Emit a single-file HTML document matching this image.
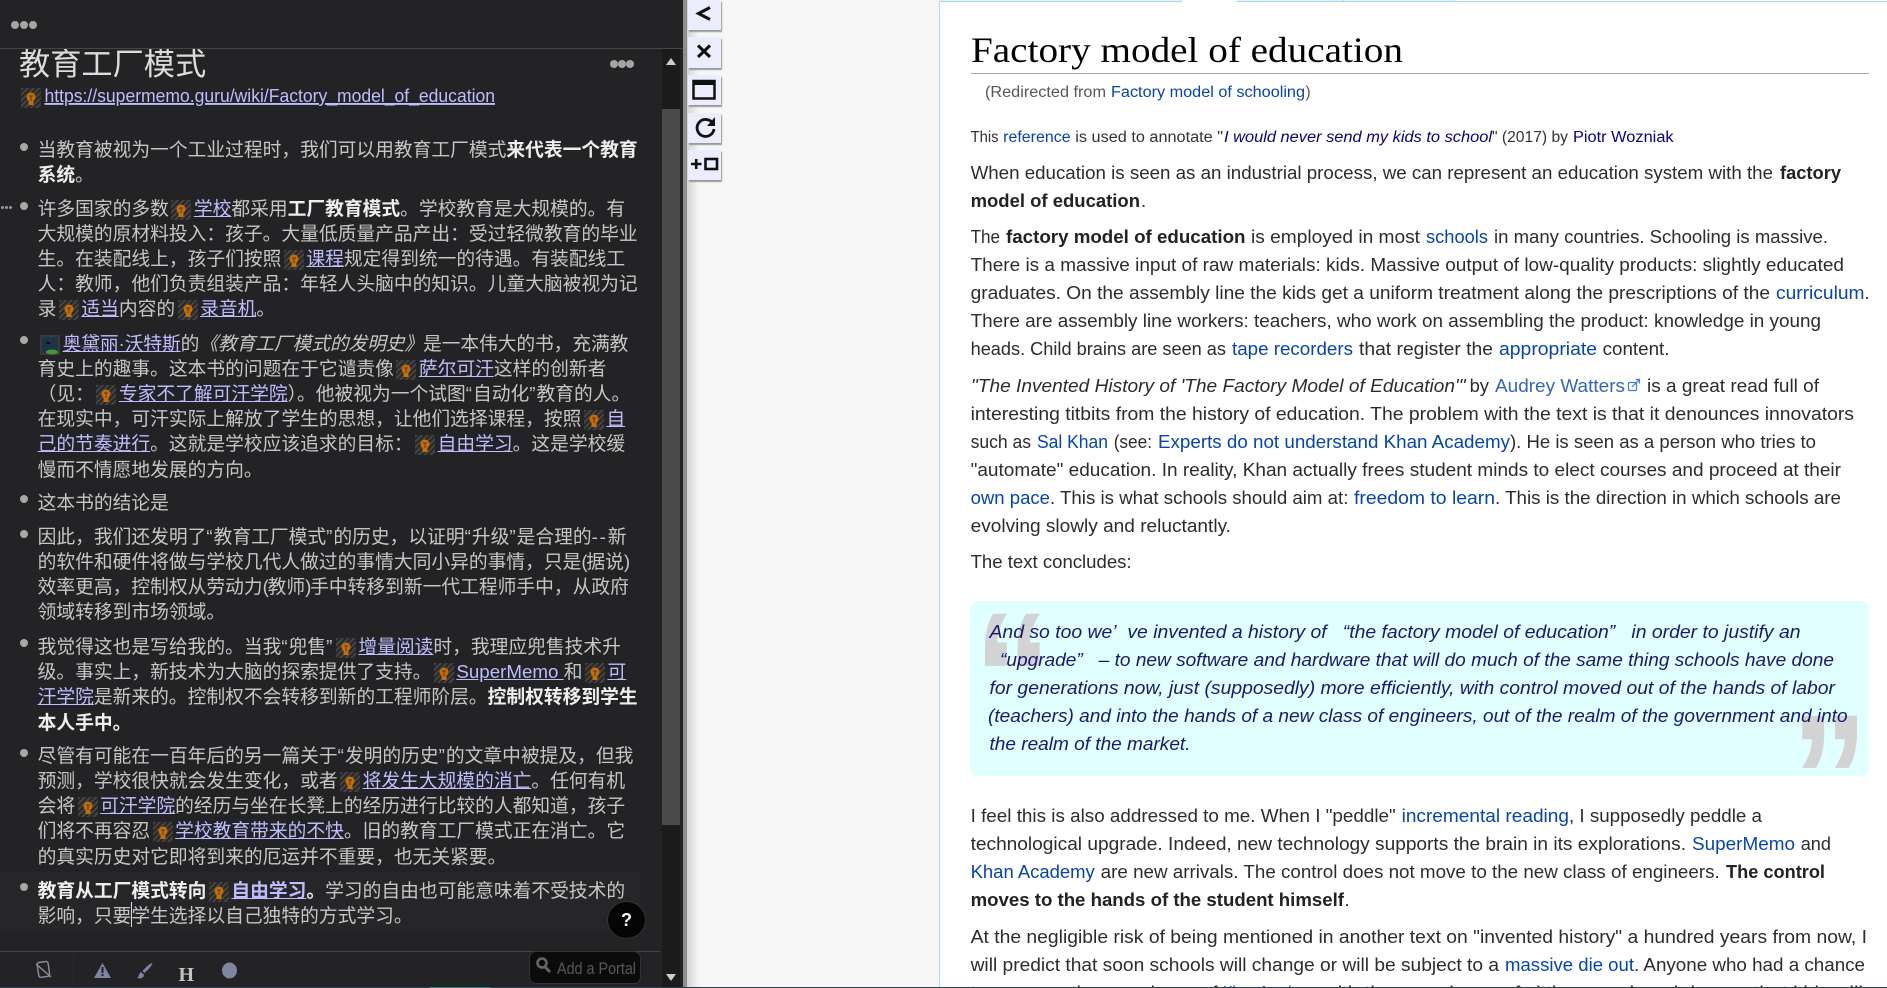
<!DOCTYPE html>
<html lang="zh"><head><meta charset="utf-8"><title>教育工厂模式</title>
<style>
html,body{margin:0;padding:0;width:1887px;height:988px;overflow:hidden;background:#f6f6f6}
body{position:relative;font-family:"Liberation Sans","Noto Sans CJK SC",sans-serif}
.abs{position:absolute}
#left{left:0;top:0;width:683px;height:988px;background:#232325;overflow:hidden}
.l{position:absolute;left:37.6px;white-space:pre;line-height:25.2px;font-size:18.75px;color:#c6c6c6}
.l b{color:#eee;font-weight:700}
.l a{color:#bdbdff;text-decoration:underline}
.l i{font-style:italic}
.p{letter-spacing:1px}
.h{letter-spacing:1.8px}
.n{letter-spacing:-1.2px}
.k{display:inline-block;width:20px;height:20px;margin:0 2.5px;vertical-align:-5px}
.k svg{display:block}
.dot{position:absolute;left:20px;width:8px;height:8px;border-radius:50%;background:#a8a8a8}
#title{left:19px;top:49px;width:300px;height:32px;overflow:hidden;font-size:31.2px;line-height:32px;color:#dcdcdc;white-space:nowrap}
#track{left:662px;top:49px;width:18px;height:939px;background:#1b1b1c}
#thumb{left:662px;top:109px;width:18px;height:716px;background:#4b4b4b}
#hl{left:0;top:872px;width:640px;height:58px;background:#262629}
#help{left:607px;top:901px;width:39px;height:38px;border-radius:50%;background:#050505;border:1px solid #333;box-sizing:border-box;color:#fff;text-align:center;line-height:36px;font-weight:700;font-size:18px}
#portal{left:529px;top:951px;width:112px;height:33px;background:#0b0b0b;border:1px solid #333;border-radius:7px;box-sizing:border-box}
.btn{position:absolute;left:688px;width:33px;background:#ececff;box-shadow:1px 2px 1px #999}
text{font-family:"Liberation Sans","Noto Sans CJK SC",sans-serif}
.t{font-size:18.5px;fill:#2c2c2c}
.a{font-size:18.5px;fill:#0645ad}
.bb{font-size:18.5px;fill:#222;font-weight:700}
.s{font-size:15.5px;fill:#333}
.sa{font-size:15.5px;fill:#0645ad}
.sv{font-size:15.5px;fill:#0b0080}
.q{font-size:18.5px;fill:#191970;font-style:italic}
</style></head><body>
<svg width="0" height="0" style="position:absolute"><defs>
<pattern id="h" width="4" height="4" patternUnits="userSpaceOnUse" patternTransform="rotate(45)"><rect width="4" height="4" fill="#272727"/><rect width="2" height="4" fill="#454545"/></pattern>
<g id="bulb"><rect width="20" height="20" fill="url(#h)"/><circle cx="10" cy="9" r="4.500" fill="#c86e00"/><rect x="7.500" y="12" width="5" height="5" fill="#c86e00"/><path d="M8 8h4M10 8v5" stroke="#5a3000" stroke-width="1" fill="none"/></g>
</defs></svg>

<div id="left" class="abs">
<div class="abs" style="left:0;top:48px;width:683px;height:1px;background:#454545"></div>
<div class="abs" style="left:11px;top:21px;width:8px;height:8px;border-radius:50%;background:#a5a5a5;box-shadow:9px 0 0 #a5a5a5,18px 0 0 #a5a5a5"></div>
<div id="title" class="abs">教育工厂模式</div>
<div class="abs" style="left:610px;top:60px;width:8px;height:8px;border-radius:50%;background:#a5a5a5;box-shadow:8px 0 0 #a5a5a5,16px 0 0 #a5a5a5"></div>
<div id="track" class="abs"></div><div id="thumb" class="abs"></div>
<div id="hl" class="abs"></div>

<div class="l" style="left:18.5px;top:84.4px"><span class="k"><svg width="20" height="20"><use href="#bulb"/></svg></span></div>

<div class="dot" style="top:143px"></div><div class="dot" style="top:202px"></div><div class="dot" style="top:336px"></div><div class="dot" style="top:495px"></div><div class="dot" style="top:530px"></div><div class="dot" style="top:639px"></div><div class="dot" style="top:749px"></div><div class="dot" style="top:883px"></div>
<div class="abs" style="left:1px;top:206px;width:3px;height:3px;border-radius:50%;background:#999;box-shadow:4px 0 0 #999,8px 0 0 #999"></div>

<div class="l" style="top:137.4px">当教育被视为一个工业过程时，我们可以用教育工厂模式<b>来代表一个教育</b></div>
<div class="l" style="top:162.4px"><b>系统</b>。</div>

<div class="l" style="top:195.7px">许多国家的多数<span class="k"><svg width="20" height="20"><use href="#bulb"/></svg></span><a>学校</a>都采用<b>工厂教育模式</b>。学校教育是大规模的。有</div>
<div class="l" style="top:220.8px">大规模的原材料投入：孩子。大量低质量产品产出：受过轻微教育的毕业</div>
<div class="l" style="top:246px">生。在装配线上，孩子们按照<span class="k"><svg width="20" height="20"><use href="#bulb"/></svg></span><a>课程</a>规定得到统一的待遇。有装配线工</div>
<div class="l" style="top:271.2px">人：教师，他们负责组装产品：年轻人头脑中的知识。儿童大脑被视为记</div>
<div class="l" style="top:296.4px">录<span class="k"><svg width="20" height="20"><use href="#bulb"/></svg></span><a>适当</a>内容的<span class="k"><svg width="20" height="20"><use href="#bulb"/></svg></span><a>录音机</a>。</div>

<div class="l" style="top:331.4px;letter-spacing:-.1px"><span class="k"><svg width="20" height="20"><rect width="20" height="20" fill="#3a3a3a"/><rect x="2" y="2" width="16" height="16" fill="#1d3347"/><path d="M5 9l3-3 3 3z" fill="#111"/><ellipse cx="12" cy="17" rx="6" ry="2.5" fill="#3f9a2e"/></svg></span><a>奥黛丽·沃特斯</a>的<i>《教育工厂模式的发明史》</i>是一本伟大的书，充满教</div>
<div class="l" style="top:355.8px">育史上的趣事。这本书的问题在于它谴责像<span class="k"><svg width="20" height="20"><use href="#bulb"/></svg></span><a>萨尔可汗</a>这样的创新者</div>
<div class="l" style="top:381px">（见：<span class="k"><svg width="20" height="20"><use href="#bulb"/></svg></span><a>专家不了解可汗学院</a>）。他被视为一个试图<span class="p">“</span>自动化<span class="p">”</span>教育的人。</div>
<div class="l" style="top:406.2px">在现实中，可汗实际上解放了学生的思想，让他们选择课程，按照<span class="k"><svg width="20" height="20"><use href="#bulb"/></svg></span><a>自</a></div>
<div class="l" style="top:431.4px"><a>己的节奏进行</a>。这就是学校应该追求的目标：<span class="k"><svg width="20" height="20"><use href="#bulb"/></svg></span><a>自由学习</a>。这是学校缓</div>
<div class="l" style="top:456.6px">慢而不情愿地发展的方向。</div>

<div class="l" style="top:490.4px">这本书的结论是</div>

<div class="l" style="top:524.4px">因此，我们还发明了<span class="p">“</span>教育工厂模式<span class="p">”</span>的历史，以证明<span class="p">“</span>升级<span class="p">”</span>是合理的<span class="h">--</span>新</div>
<div class="l" style="top:549px">的软件和硬件将做与学校几代人做过的事情大同小异的事情，只是<span class="n">(</span>据说<span class="n">)</span></div>
<div class="l" style="top:574.2px">效率更高，控制权从劳动力<span class="n">(</span>教师<span class="n">)</span>手中转移到新一代工程师手中，从政府</div>
<div class="l" style="top:599.4px">领域转移到市场领域。</div>

<div class="l" style="top:634.4px">我觉得这也是写给我的。当我<span class="p">“</span>兜售<span class="p">”</span><span class="k"><svg width="20" height="20"><use href="#bulb"/></svg></span><a>增量阅读</a>时，我理应兜售技术升</div>
<div class="l" style="top:659px">级。事实上，新技术为大脑的探索提供了支持。<span class="k"><svg width="20" height="20"><use href="#bulb"/></svg></span><a>SuperMemo </a>和<span class="k"><svg width="20" height="20"><use href="#bulb"/></svg></span><a>可</a></div>
<div class="l" style="top:684.2px"><a>汗学院</a>是新来的。控制权不会转移到新的工程师阶层。<b>控制权转移到学生</b></div>
<div class="l" style="top:709.6px"><b>本人手中。</b></div>

<div class="l" style="top:743.4px">尽管有可能在一百年后的另一篇关于<span class="p">“</span>发明的历史<span class="p">”</span>的文章中被提及，但我</div>
<div class="l" style="top:768px">预测，学校很快就会发生变化，或者<span class="k"><svg width="20" height="20"><use href="#bulb"/></svg></span><a>将发生大规模的消亡</a>。任何有机</div>
<div class="l" style="top:793.2px">会将<span class="k"><svg width="20" height="20"><use href="#bulb"/></svg></span><a>可汗学院</a>的经历与坐在长凳上的经历进行比较的人都知道，孩子</div>
<div class="l" style="top:818.4px">们将不再容忍<span class="k"><svg width="20" height="20"><use href="#bulb"/></svg></span><a>学校教育带来的不快</a>。旧的教育工厂模式正在消亡。它</div>
<div class="l" style="top:843.6px">的真实历史对它即将到来的厄运并不重要，也无关紧要。</div>

<div class="l" style="top:878.4px"><b>教育从工厂模式转向</b><span class="k"><svg width="20" height="20"><use href="#bulb"/></svg></span><a><b style="color:#bdbdff">自由学习</b></a><b>。</b>学习的自由也可能意味着不受技术的</div>
<div class="l" style="top:903.2px">影响，只要学生选择以自己独特的方式学习。</div>
<div class="abs" style="left:131px;top:902px;width:1px;height:25px;background:#ddd"></div>

<div id="help" class="abs">?</div>
<div class="abs" style="left:0;top:951px;width:660px;height:1px;background:#454545"></div>
<div class="abs" style="left:73px;top:955px;width:1px;height:32px;background:#2c2c2e"></div>
<div id="portal" class="abs"></div>
</div>

<!-- gray divider and shadow -->
<div class="abs" style="left:683px;top:0;width:4px;height:988px;background:#8e8e8e"></div>
<div class="abs" style="left:687px;top:0;width:12px;height:988px;background:linear-gradient(90deg,#d4d4d4,#f6f6f6)"></div>

<!-- sidebar buttons -->
<div class="btn" style="top:0;height:30px"></div>
<div class="btn" style="top:37px;height:31px"></div>
<div class="btn" style="top:75px;height:30px"></div>
<div class="btn" style="top:113px;height:30px"></div>
<div class="btn" style="top:150px;height:30px"></div>

<!-- right page -->
<div class="abs" style="left:939px;top:0;width:948px;height:988px;background:#fff"></div>
<div class="abs" style="left:939px;top:0;width:1px;height:988px;background:#a7d7f9"></div>
<div class="abs" style="left:939px;top:1px;width:948px;height:1px;background:#a7d7f9"></div>
<div class="abs" style="left:939px;top:0;width:516px;height:1px;background:#e3f1fb"></div>
<div class="abs" style="left:1182px;top:0;width:55px;height:2px;background:#fff"></div>
<div class="abs" style="left:1343px;top:0;width:1px;height:2px;background:#a7d7f9"></div>
<div class="abs" style="left:1454px;top:0;width:1px;height:2px;background:#a7d7f9"></div>
<div class="abs" style="left:971px;top:73px;width:898px;height:1px;background:#aaa"></div>
<div class="abs" style="left:970px;top:601px;width:899px;height:175px;background:#e0ffff;border-radius:8px"></div>

<svg class="abs" style="left:0;top:0" width="1887" height="988" viewBox="0 0 1887 988">
<!-- left extras -->
<text x="44.5" y="102" font-size="18.8" fill="#bdbdff" text-decoration="underline" textLength="450.5" lengthAdjust="spacingAndGlyphs">https://supermemo.guru/wiki/Factory_model_of_education</text>
<path d="M671 58l5 7h-10z" fill="#ccc"/><path d="M666 974h10l-5 7z" fill="#ccc"/>
<g fill="none" stroke="#8a8f9c" stroke-width="1.4"><rect x="38" y="962" width="11" height="15" rx="2" transform="rotate(-8 43 970)"/><path d="M36 964l15 13"/></g>
<path d="M102.500 963l8.500 15h-17z" fill="#7c869f"/><rect x="101.500" y="967" width="2" height="6" fill="#232325"/><rect x="101.500" y="974" width="2" height="2" fill="#232325"/>
<path d="M152.500 963c-1 4-6 8-8 10l-2-2c2-2 6-7 10-8z" fill="#7c869f"/><path d="M141 972l3 3c0 3-4 4-7 3 2-1 2-5 4-6z" fill="#7c869f"/>
<text x="178.500" y="981" font-size="20" font-weight="700" fill="#c4c4c4" style="font-family:'Liberation Serif',serif">H</text>
<ellipse cx="229.500" cy="970.500" rx="7.500" ry="8" fill="#7c869f"/>
<circle cx="542" cy="963" r="4.500" fill="none" stroke="#666" stroke-width="2.500"/><path d="M545 967l5 5" stroke="#666" stroke-width="3"/>
<text x="557" y="974" font-size="16.500" fill="#585858" textLength="79" lengthAdjust="spacingAndGlyphs">Add a Portal</text>
<!-- button icons -->
<path d="M710 7.500L698.500 13.500 710 19.500" fill="none" stroke="#111" stroke-width="3"/>
<path d="M698 45.500l12 11.500M710 45.500l-12 11.500" fill="none" stroke="#111" stroke-width="3"/>
<rect x="693.500" y="81" width="21" height="17.500" fill="none" stroke="#111" stroke-width="2.500"/><rect x="692.500" y="80" width="23" height="5" fill="#111"/>
<path d="M712.500 123a8.500 8.500 0 1 0 1.500 6" fill="none" stroke="#111" stroke-width="2.800"/><path d="M715 117v9h-8z" fill="#111"/>
<path d="M691 164h10.500M696.200 159v10" stroke="#111" stroke-width="2.600" fill="none"/><rect x="705.500" y="159" width="11.500" height="10" fill="none" stroke="#111" stroke-width="2.600"/>

<!-- title -->
<text x="971" y="62" font-size="36" fill="#000" style="font-family:'Liberation Serif',serif" textLength="432" lengthAdjust="spacingAndGlyphs">Factory model of education</text>
<text x="985" y="97" class="s" style="fill:#54595d" textLength="121" lengthAdjust="spacingAndGlyphs">(Redirected from</text>
<text x="1111" y="97" class="sa" textLength="194" lengthAdjust="spacingAndGlyphs">Factory model of schooling</text>
<text x="1305.500" y="97" class="s" style="fill:#54595d">)</text>

<!-- small line -->
<text x="970.600" y="142" class="s" textLength="28" lengthAdjust="spacingAndGlyphs">This</text>
<text x="1003.200" y="142" class="sa" textLength="67.400" lengthAdjust="spacingAndGlyphs">reference</text>
<text x="1075.300" y="142" class="s" textLength="147.700" lengthAdjust="spacingAndGlyphs">is used to annotate "</text>
<text x="1224" y="142" class="sv" font-style="italic" textLength="268" lengthAdjust="spacingAndGlyphs">I would never send my kids to school</text>
<text x="1492" y="142" class="s" textLength="76" lengthAdjust="spacingAndGlyphs">" (2017) by</text>
<text x="1573" y="142" class="sv" textLength="100.600" lengthAdjust="spacingAndGlyphs">Piotr Wozniak</text>

<!-- para 1 -->
<text x="970.600" y="179" class="t" textLength="802.400" lengthAdjust="spacingAndGlyphs">When education is seen as an industrial process, we can represent an education system with the</text>
<text x="1780" y="179" class="bb" textLength="61" lengthAdjust="spacingAndGlyphs">factory</text>
<text x="970.600" y="207" class="bb" textLength="169.400" lengthAdjust="spacingAndGlyphs">model of education</text>
<text x="1141" y="207" class="t">.</text>

<!-- para 2 -->
<text x="970.600" y="243" class="t" textLength="29.400" lengthAdjust="spacingAndGlyphs">The</text>
<text x="1006" y="243" class="bb" textLength="239.500" lengthAdjust="spacingAndGlyphs">factory model of education</text>
<text x="1251" y="243" class="t" textLength="169" lengthAdjust="spacingAndGlyphs">is employed in most</text>
<text x="1426" y="243" class="a" textLength="62" lengthAdjust="spacingAndGlyphs">schools</text>
<text x="1494" y="243" class="t" textLength="334" lengthAdjust="spacingAndGlyphs">in many countries. Schooling is massive.</text>
<text x="970.600" y="271" class="t" textLength="873.400" lengthAdjust="spacingAndGlyphs">There is a massive input of raw materials: kids. Massive output of low-quality products: slightly educated</text>
<text x="970.600" y="299" class="t" textLength="799.400" lengthAdjust="spacingAndGlyphs">graduates. On the assembly line the kids get a uniform treatment along the prescriptions of the</text>
<text x="1776" y="299" class="a" textLength="88.500" lengthAdjust="spacingAndGlyphs">curriculum</text>
<text x="1864.500" y="299" class="t">.</text>
<text x="970.600" y="327" class="t" textLength="850.400" lengthAdjust="spacingAndGlyphs">There are assembly line workers: teachers, who work on assembling the product: knowledge in young</text>
<text x="970.600" y="355" class="t" textLength="255.400" lengthAdjust="spacingAndGlyphs">heads. Child brains are seen as</text>
<text x="1232" y="355" class="a" textLength="121" lengthAdjust="spacingAndGlyphs">tape recorders</text>
<text x="1359" y="355" class="t" textLength="134" lengthAdjust="spacingAndGlyphs">that register the</text>
<text x="1499" y="355" class="a" textLength="98" lengthAdjust="spacingAndGlyphs">appropriate</text>
<text x="1602.600" y="355" class="t" textLength="66.900" lengthAdjust="spacingAndGlyphs">content.</text>

<!-- para 3 -->
<text x="971" y="392" class="t" font-style="italic" textLength="494.500" lengthAdjust="spacingAndGlyphs">"The Invented History of 'The Factory Model of Education'"</text>
<text x="1469.600" y="392" class="t" textLength="19.400" lengthAdjust="spacingAndGlyphs">by</text>
<text x="1495" y="392" class="a" style="fill:#3366bb" textLength="130" lengthAdjust="spacingAndGlyphs">Audrey Watters</text>
<g fill="none" stroke="#3a7fd0" stroke-width="1.200"><rect x="1628.500" y="382.500" width="8" height="8" rx="1"/><path d="M1632 387l7-7M1635.500 379.500h4v4"/></g>
<text x="1647" y="392" class="t" textLength="172" lengthAdjust="spacingAndGlyphs">is a great read full of</text>
<text x="970.600" y="420" class="t" textLength="883.400" lengthAdjust="spacingAndGlyphs">interesting titbits from the history of education. The problem with the text is that it denounces innovators</text>
<text x="970.600" y="448" class="t" textLength="60.400" lengthAdjust="spacingAndGlyphs">such as</text>
<text x="1037" y="448" class="a" textLength="71" lengthAdjust="spacingAndGlyphs">Sal Khan</text>
<text x="1113.700" y="448" class="t" textLength="38.300" lengthAdjust="spacingAndGlyphs">(see:</text>
<text x="1158" y="448" class="a" textLength="352" lengthAdjust="spacingAndGlyphs">Experts do not understand Khan Academy</text>
<text x="1510" y="448" class="t" textLength="306" lengthAdjust="spacingAndGlyphs">). He is seen as a person who tries to</text>
<text x="970.600" y="476" class="t" textLength="870.400" lengthAdjust="spacingAndGlyphs">"automate" education. In reality, Khan actually frees student minds to elect courses and proceed at their</text>
<text x="970.600" y="504" class="a" textLength="79.400" lengthAdjust="spacingAndGlyphs">own pace</text>
<text x="1050" y="504" class="t" textLength="298.400" lengthAdjust="spacingAndGlyphs">. This is what schools should aim at:</text>
<text x="1354" y="504" class="a" textLength="141" lengthAdjust="spacingAndGlyphs">freedom to learn</text>
<text x="1495" y="504" class="t" textLength="346" lengthAdjust="spacingAndGlyphs">. This is the direction in which schools are</text>
<text x="970.600" y="532" class="t" textLength="260.400" lengthAdjust="spacingAndGlyphs">evolving slowly and reluctantly.</text>
<text x="970.600" y="568" class="t" textLength="161" lengthAdjust="spacingAndGlyphs">The text concludes:</text>

<!-- quote -->
<text x="973.500" y="741" font-size="185" font-weight="700" fill="#d3d3d3" textLength="78" lengthAdjust="spacingAndGlyphs">“</text>
<text x="1790.500" y="843" font-size="185" font-weight="700" fill="#d3d3d3" textLength="78" lengthAdjust="spacingAndGlyphs">”</text>
<text x="989.500" y="638" class="q" textLength="811" lengthAdjust="spacingAndGlyphs">And so too we’&#160;&#160;ve invented a history of &#160;&#160;“the factory model of education” &#160;&#160;in order to justify an</text>
<text x="1000" y="666" class="q" textLength="834" lengthAdjust="spacingAndGlyphs">“upgrade” &#160;&#160;– to new software and hardware that will do much of the same thing schools have done</text>
<text x="989.500" y="694" class="q" textLength="845.500" lengthAdjust="spacingAndGlyphs">for generations now, just (supposedly) more efficiently, with control moved out of the hands of labor</text>
<text x="988" y="722" class="q" textLength="859.600" lengthAdjust="spacingAndGlyphs">(teachers) and into the hands of a new class of engineers, out of the realm of the government and into</text>
<text x="989.500" y="750" class="q" textLength="201" lengthAdjust="spacingAndGlyphs">the realm of the market.</text>

<!-- para after quote -->
<text x="970.600" y="822" class="t" textLength="425.100" lengthAdjust="spacingAndGlyphs">I feel this is also addressed to me. When I "peddle"</text>
<text x="1401.600" y="822" class="a" textLength="167.400" lengthAdjust="spacingAndGlyphs">incremental reading</text>
<text x="1569" y="822" class="t" textLength="193" lengthAdjust="spacingAndGlyphs">, I supposedly peddle a</text>
<text x="970.600" y="850" class="t" textLength="715.400" lengthAdjust="spacingAndGlyphs">technological upgrade. Indeed, new technology supports the brain in its explorations.</text>
<text x="1692" y="850" class="a" textLength="103" lengthAdjust="spacingAndGlyphs">SuperMemo</text>
<text x="1800.700" y="850" class="t" textLength="30.300" lengthAdjust="spacingAndGlyphs">and</text>
<text x="970.600" y="878" class="a" textLength="124.200" lengthAdjust="spacingAndGlyphs">Khan Academy</text>
<text x="1100.700" y="878" class="t" textLength="619" lengthAdjust="spacingAndGlyphs">are new arrivals. The control does not move to the new class of engineers.</text>
<text x="1726" y="878" class="bb" textLength="99" lengthAdjust="spacingAndGlyphs">The control</text>
<text x="970.600" y="906" class="bb" textLength="373.400" lengthAdjust="spacingAndGlyphs">moves to the hands of the student himself</text>
<text x="1344.500" y="906" class="t">.</text>

<text x="970.600" y="943" class="t" textLength="896.400" lengthAdjust="spacingAndGlyphs">At the negligible risk of being mentioned in another text on "invented history" a hundred years from now, I</text>
<text x="970.600" y="971" class="t" textLength="528.400" lengthAdjust="spacingAndGlyphs">will predict that soon schools will change or will be subject to a</text>
<text x="1505" y="971" class="a" textLength="129" lengthAdjust="spacingAndGlyphs">massive die out</text>
<text x="1634" y="971" class="t" textLength="231" lengthAdjust="spacingAndGlyphs">. Anyone who had a chance</text>
<text x="970.600" y="999" class="t" textLength="247" lengthAdjust="spacingAndGlyphs">to compare the experience of</text>
<text x="1223" y="999" class="a" textLength="95" lengthAdjust="spacingAndGlyphs">Khan Academy</text>
<text x="1323" y="999" class="t" textLength="540" lengthAdjust="spacingAndGlyphs">with the experience of sitting on a bench knows that kids will</text>

<!-- bottom strip -->
<rect x="0" y="987" width="1887" height="1" fill="#1f4650"/>
<rect x="430" y="987" width="61" height="1" fill="#2c7f86"/>
</svg>
</body></html>
